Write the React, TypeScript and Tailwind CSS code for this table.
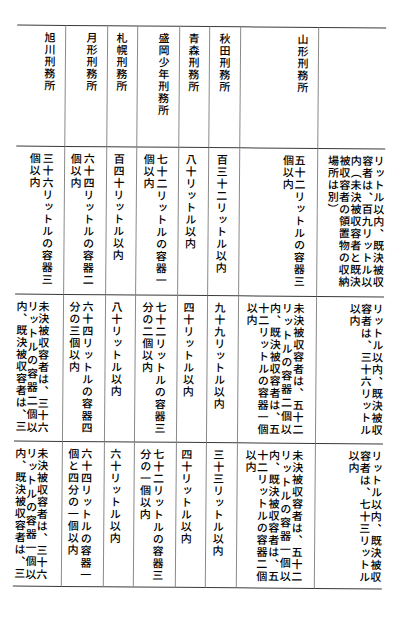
import React from 'react';

type C = { t: string; pr: string; lh: string };

const headers: { t: string }[] = [
  { t: '旭川刑務所' },
  { t: '月形刑務所' },
  { t: '札幌刑務所' },
  { t: '盛岡少年刑務所' },
  { t: '青森刑務所' },
  { t: '秋田刑務所' },
  { t: '山形刑務所' },
  { t: '' },
];

const rows: C[][] = [
  [
    { t: '三十六リットルの容器三個以内', pr: 'pr-[10px]', lh: 'leading-[13px]' },
    { t: '六十四リットルの容器二個以内', pr: 'pr-[11px]', lh: 'leading-[13px]' },
    { t: '百四十リットル以内', pr: 'pr-[11px]', lh: 'leading-[12px]' },
    { t: '七十二リットルの容器一個以内', pr: 'pr-[10px]', lh: 'leading-[13px]' },
    { t: '八十リットル以内', pr: 'pr-[11px]', lh: 'leading-[12px]' },
    { t: '百三十二リットル以内', pr: 'pr-[11px]', lh: 'leading-[12px]' },
    { t: '五十二リットルの容器三個以内', pr: 'pr-[12px]', lh: 'leading-[11.7px]' },
    {
      t: 'リットル以内、既決被収容者は、百九リットル以内（未決被収容者と既決被収容者の領置物の収納場所は別）',
      pr: 'pr-[1px]',
      lh: 'leading-[11.4px]',
    },
  ],
  [
    {
      t: '未決被収容者は、三十六リットルの容器二個以内、既決被収容者は、三',
      pr: 'pr-[14px]',
      lh: 'leading-[11px]',
    },
    { t: '六十四リットルの容器四分の三個以内', pr: 'pr-[11px]', lh: 'leading-[13px]' },
    { t: '八十リットル以内', pr: 'pr-[12px]', lh: 'leading-[12px]' },
    { t: '七十二リットルの容器三分の二個以内', pr: 'pr-[10px]', lh: 'leading-[13px]' },
    { t: '四十リットル以内', pr: 'pr-[12px]', lh: 'leading-[12px]' },
    { t: '九十九リットル以内', pr: 'pr-[12px]', lh: 'leading-[12px]' },
    {
      t: '未決被収容者は、五十二リットルの容器二個以内、既決被収容者は、五十二リットルの容器一個以内',
      pr: 'pr-[12px]',
      lh: 'leading-[11.7px]',
    },
    { t: 'リットル以内、既決被収容者は、三十六リットル以内', pr: 'pr-[1px]', lh: 'leading-[11.4px]' },
  ],
  [
    {
      t: '未決被収容者は、三十六リットルの容器一個以内、既決被収容者は、三',
      pr: 'pr-[14px]',
      lh: 'leading-[11px]',
    },
    { t: '六十四リットルの容器一個と四分の一個以内', pr: 'pr-[11px]', lh: 'leading-[13px]' },
    { t: '六十リットル以内', pr: 'pr-[12px]', lh: 'leading-[12px]' },
    { t: '七十二リットルの容器三分の一個以内', pr: 'pr-[11px]', lh: 'leading-[13px]' },
    { t: '四十リットル以内', pr: 'pr-[13px]', lh: 'leading-[12px]' },
    { t: '三十三リットル以内', pr: 'pr-[12px]', lh: 'leading-[12px]' },
    {
      t: '未決被収容者は、五十二リットルの容器一個以内、既決被収容者は、五十二リットルの容器二個以内',
      pr: 'pr-[12px]',
      lh: 'leading-[11.7px]',
    },
    { t: 'リットル以内、既決被収容者は、七十三リットル以内', pr: 'pr-[1px]', lh: 'leading-[11.4px]' },
  ],
];

function HeaderCell({ t, idx }: { t: string; idx: number }) {
  const rb = idx < 7;
  return (
    <div
      className={
        'flex justify-end pt-[6px] pr-[9px] border-t border-t-[#3a3a3a] ' +
        (rb ? 'border-r border-r-[#8a8a8a]' : '')
      }
    >
      {t ? (
        <div className="[writing-mode:vertical-rl] text-[11px] font-medium tracking-[1px] leading-[12px] text-black">{t}</div>
      ) : null}
    </div>
  );
}

function DataCell({ c, idx, last }: { c: C; idx: number; last: boolean }) {
  const rb = idx < 7;
  return (
    <div
      className={
        'flex justify-end pt-[6px] border-t border-t-[#3a3a3a] ' +
        c.pr +
        ' ' +
        (rb ? 'border-r border-r-[#8a8a8a] ' : '') +
        (last ? 'border-b border-b-[#3a3a3a]' : '')
      }
    >
      <div
        className={
          '[writing-mode:vertical-rl] h-[133px] text-justify text-[11px] font-medium tracking-[1px] text-black ' + c.lh
        }
      >
        {c.t}
      </div>
    </div>
  );
}

export default function App() {
  return (
    <div
      lang="ja"
      className="w-[420px] h-[631px] overflow-hidden bg-white pt-[26px] pl-[15px] font-['Noto_Sans_CJK_JP',sans-serif]"
    >
      <div className="rotate-[0.45deg] w-[369px] grid grid-cols-[49px_42px_30px_42px_30px_31px_78px_67px] grid-rows-[121px_148px_147px_146px]">
        {headers.map((h, i) => (
          <HeaderCell key={'h' + i} t={h.t} idx={i} />
        ))}
        {rows.map((r, ri) =>
          r.map((c, ci) => <DataCell key={ri + '-' + ci} c={c} idx={ci} last={ri === rows.length - 1} />)
        )}
      </div>
    </div>
  );
}
